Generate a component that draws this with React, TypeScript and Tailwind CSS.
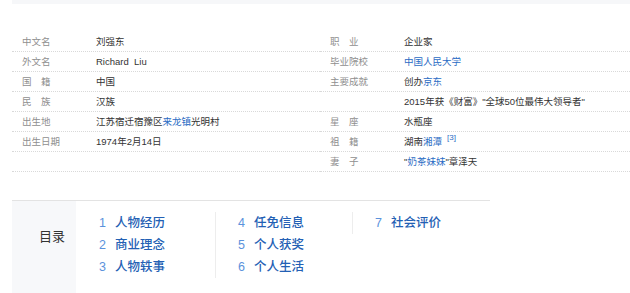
import React from "react";

type Part = { t: string; link?: boolean };
type Row = { label: string; value: Part[]; sup?: string };

const left: Row[] = [
  { label: "中文名", value: [{ t: "刘强东" }] },
  { label: "外文名", value: [{ t: "Richard\u00a0\u00a0Liu" }] },
  { label: "国\u3000籍", value: [{ t: "中国" }] },
  { label: "民\u3000族", value: [{ t: "汉族" }] },
  { label: "出生地", value: [{ t: "江苏宿迁宿豫区" }, { t: "来龙镇", link: true }, { t: "光明村" }] },
  { label: "出生日期", value: [{ t: "1974年2月14日" }] },
  { label: "", value: [] },
];

const right: Row[] = [
  { label: "职\u3000业", value: [{ t: "企业家" }] },
  { label: "毕业院校", value: [{ t: "中国人民大学", link: true }] },
  { label: "主要成就", value: [{ t: "创办" }, { t: "京东", link: true }] },
  { label: "", value: [{ t: "2015年获《财富》\"全球50位最伟大领导者\"" }] },
  { label: "星\u3000座", value: [{ t: "水瓶座" }] },
  { label: "祖\u3000籍", value: [{ t: "湖南" }, { t: "湘潭", link: true }], sup: "[3]" },
  { label: "妻\u3000子", value: [{ t: "\"" }, { t: "奶茶妹妹", link: true }, { t: "\"章泽天" }] },
];

function InfoCol({ rows, width }: { rows: Row[]; width: string }) {
  return (
    <div className={width}>
      {rows.map((r, i) => (
        <div
          key={i}
          className="flex h-[20px] items-center border-b border-dotted border-[#d9d9d9] text-[9.5px] leading-[19px]"
        >
          <div className="w-[84px] shrink-0 pl-[10px] text-[#8f8f8f]">{r.label}</div>
          <div className="flex items-center whitespace-nowrap text-[#333]">
            {r.value.map((p, j) => (
              <span key={j} className={p.link ? "text-[#2b6cc4]" : ""}>
                {p.t}
              </span>
            ))}
            {r.sup && (
              <span className="relative top-[-4px] ml-[5px] text-[8px] leading-[8px] text-[#2b6cc4]">
                {r.sup}
              </span>
            )}
          </div>
        </div>
      ))}
    </div>
  );
}

const cols: [string, string][][] = [
  [
    ["1", "人物经历"],
    ["2", "商业理念"],
    ["3", "人物轶事"],
  ],
  [
    ["4", "任免信息"],
    ["5", "个人获奖"],
    ["6", "个人生活"],
  ],
  [["7", "社会评价"]],
];

export default function App() {
  return (
    <div
      className="h-[293px] w-[630px] overflow-hidden bg-white"
      style={{ fontFamily: '"Liberation Sans", Arial, "Noto Sans CJK SC", sans-serif' }}
    >
      <div className="ml-[12px] h-[4px] bg-[#f6f7f9]" />
      <div className="ml-[12px] mt-[28px] flex">
        <InfoCol rows={left} width="w-[308px]" />
        <InfoCol rows={right} width="flex-1" />
      </div>
      <div className="ml-[12px] mt-[28px] flex h-[100px] w-[478px] border-t border-[#e3e3e3]">
        <div className="w-[64px] shrink-0 bg-[#f7f8fa] pl-[27px] pt-[27px] text-[13px] leading-[18px] text-[#333]">
          目录
        </div>
        <div className="flex pt-[11px]">
          {cols.map((col, ci) => (
            <div
              key={ci}
              className={
                ci === 0
                  ? "w-[139px] self-start pl-[23px]"
                  : ci === 1
                  ? "w-[137px] self-start border-l border-[#ededed] pl-[22px]"
                  : "w-[138px] self-start border-l border-[#ededed] pl-[22px]"
              }
            >
              {col.map(([n, t]) => (
                <div key={n} className="flex h-[22px] items-center text-[12.5px]">
                  <span className="w-[16px] text-[#5b92dc]">{n}</span>
                  <span className="font-medium text-[#2360b4]">{t}</span>
                </div>
              ))}
            </div>
          ))}
        </div>
      </div>
    </div>
  );
}
